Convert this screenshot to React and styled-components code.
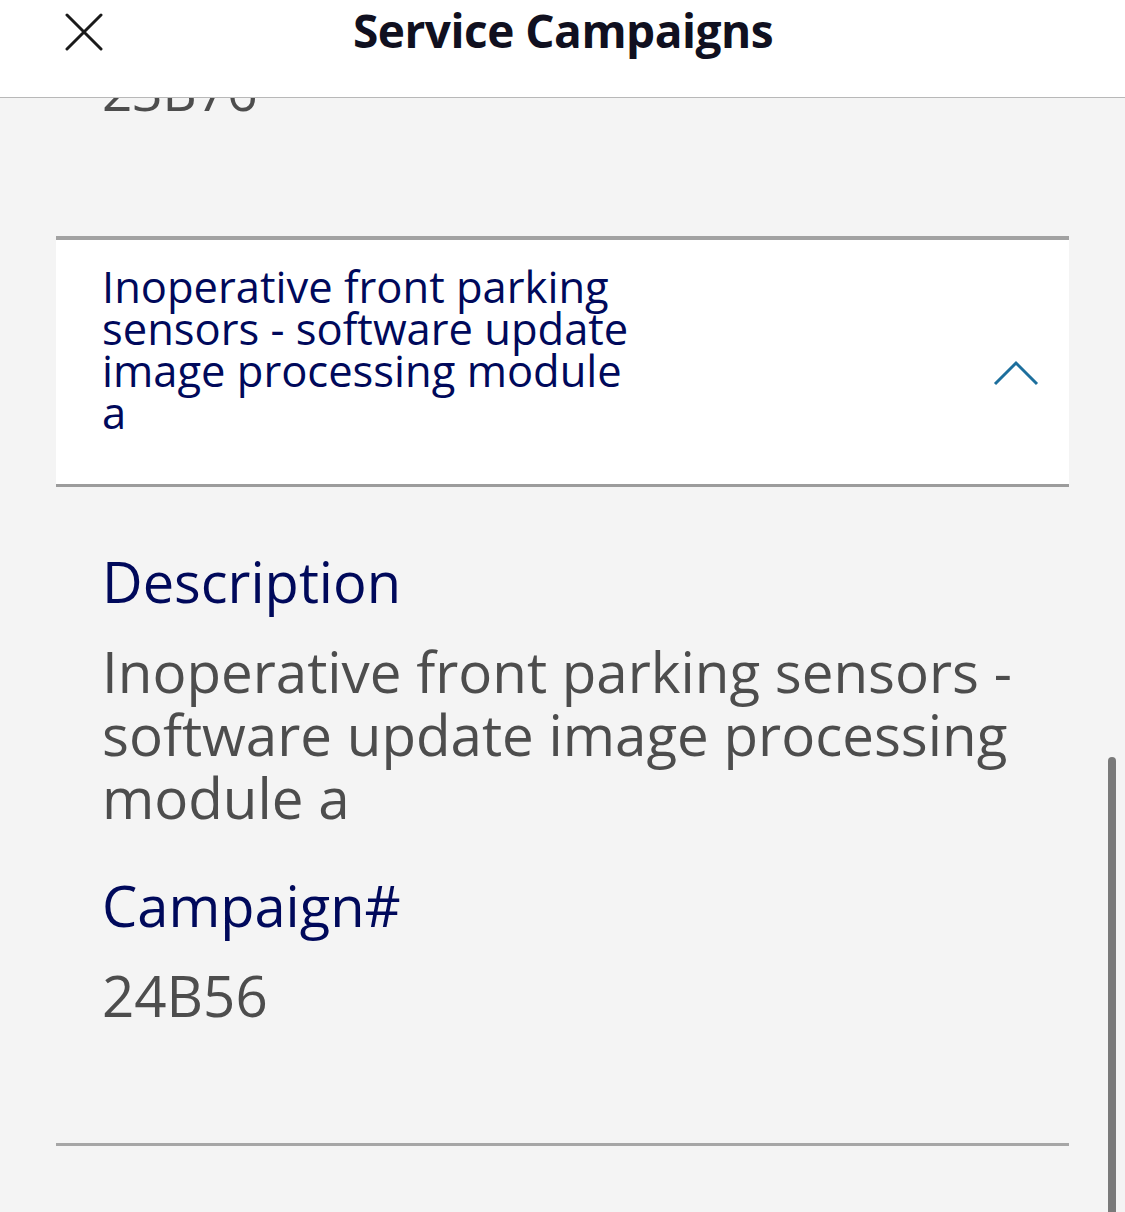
import React from 'react';
import styled, { createGlobalStyle } from 'styled-components';

const navy = '#00095b';
const grey = '#4d4d4d';

const GlobalStyle = createGlobalStyle`
  html, body {
    margin: 0;
    padding: 0;
    background: #f4f4f4;
    overflow: hidden;
  }
  * {
    box-sizing: border-box;
  }
`;

const campaigns = [
  {
    id: '23B76',
    title: 'Inoperative front parking sensors - software update image processing module a',
    description: 'Inoperative front parking sensors - software update image processing module a',
    number: '24B56',
  },
];

function CloseIcon() {
  return (
    <svg width="38" height="38" viewBox="0 0 38 38" fill="none">
      <path d="M2 2L36 36M36 2L2 36" stroke="#1a1a1a" strokeWidth="3" strokeLinecap="round" />
    </svg>
  );
}

function ChevronUp() {
  return (
    <svg width="46" height="26" viewBox="0 0 46 26" fill="none">
      <path d="M2 24L23 3L44 24" stroke="#1d6f9d" strokeWidth="3" />
    </svg>
  );
}

export default function App() {
  const item = campaigns[0];
  return (
    <Screen>
      <GlobalStyle />
      <Header>
        <CloseButton aria-label="Close">
          <CloseIcon />
        </CloseButton>
        <Title>Service Campaigns</Title>
        <span />
      </Header>
      <ScrollArea>
        <Content>
          <PrevValue>{item.id}</PrevValue>
          <Card>
            <CardHead>
              <CardTitle>{item.title}</CardTitle>
              <ChevronUp />
            </CardHead>
          </Card>
          <Details>
            <Label>Description</Label>
            <Value>{item.description}</Value>
            <Label className="second">Campaign#</Label>
            <Value>{item.number}</Value>
          </Details>
          <Divider />
        </Content>
        <Scrollbar />
      </ScrollArea>
    </Screen>
  );
}

const Screen = styled.div`
  height: 1212px;
  display: flex;
  flex-direction: column;
  font-family: "Open Sans", "Noto Sans", sans-serif;
`;

const Header = styled.header`
  height: 98px;
  flex: 0 0 98px;
  background: #fff;
  border-bottom: 1px solid #b8b8b8;
  display: grid;
  grid-template-columns: 1fr auto 1fr;
  align-items: start;
  padding: 0 0 0 65px;
  position: relative;
  z-index: 2;
`;

const CloseButton = styled.button`
  border: 0;
  background: none;
  padding: 0;
  margin-top: 13px;
  width: 38px;
  height: 38px;
  justify-self: start;
  cursor: pointer;
`;

const Title = styled.h1`
  margin: 0;
  font-family: "Open Sans", sans-serif;
  font-weight: 700;
  font-size: 46px;
  letter-spacing: -0.5px;
  color: #101020;
  line-height: 60px;
  transform: translateX(-32px);
`;

const ScrollArea = styled.main`
  flex: 1;
  overflow: hidden;
  position: relative;
`;

const Content = styled.div`
  padding: 0 56px;
`;

const PrevValue = styled.div`
  margin-top: -42px;
  padding-left: 46px;
  font-size: 53px;
  line-height: 70px;
  color: ${grey};
`;

const Card = styled.section`
  margin-top: 110px;
  background: #fff;
  border-top: 4px solid #a2a2a2;
  border-bottom: 3px solid #9c9c9c;
`;

const CardHead = styled.div`
  display: flex;
  align-items: center;
  justify-content: space-between;
  padding: 26px 30px 50px 46px;

  svg {
    margin-top: 46px;
  }
`;

const CardTitle = styled.h2`
  margin: 0;
  max-width: 545px;
  font-weight: 400;
  font-size: 43.5px;
  line-height: 42px;
  color: ${navy};
`;

const Details = styled.div`
  padding: 62px 40px 116px 46px;
`;

const Label = styled.h3`
  margin: 0;
  font-weight: 400;
  font-size: 56px;
  line-height: 64px;
  color: ${navy};

  &.second {
    margin-top: 44px;
  }
`;

const Value = styled.p`
  margin: 27px 0 0;
  font-size: 56.5px;
  line-height: 63px;
  color: ${grey};
`;

const Divider = styled.hr`
  margin: 0;
  border: 0;
  border-top: 3px solid #a6a6a6;
`;

const Scrollbar = styled.div`
  position: absolute;
  right: 9px;
  top: 659px;
  bottom: 0;
  width: 8px;
  border-radius: 4px 4px 0 0;
  background: #7a7a7a;
`;
